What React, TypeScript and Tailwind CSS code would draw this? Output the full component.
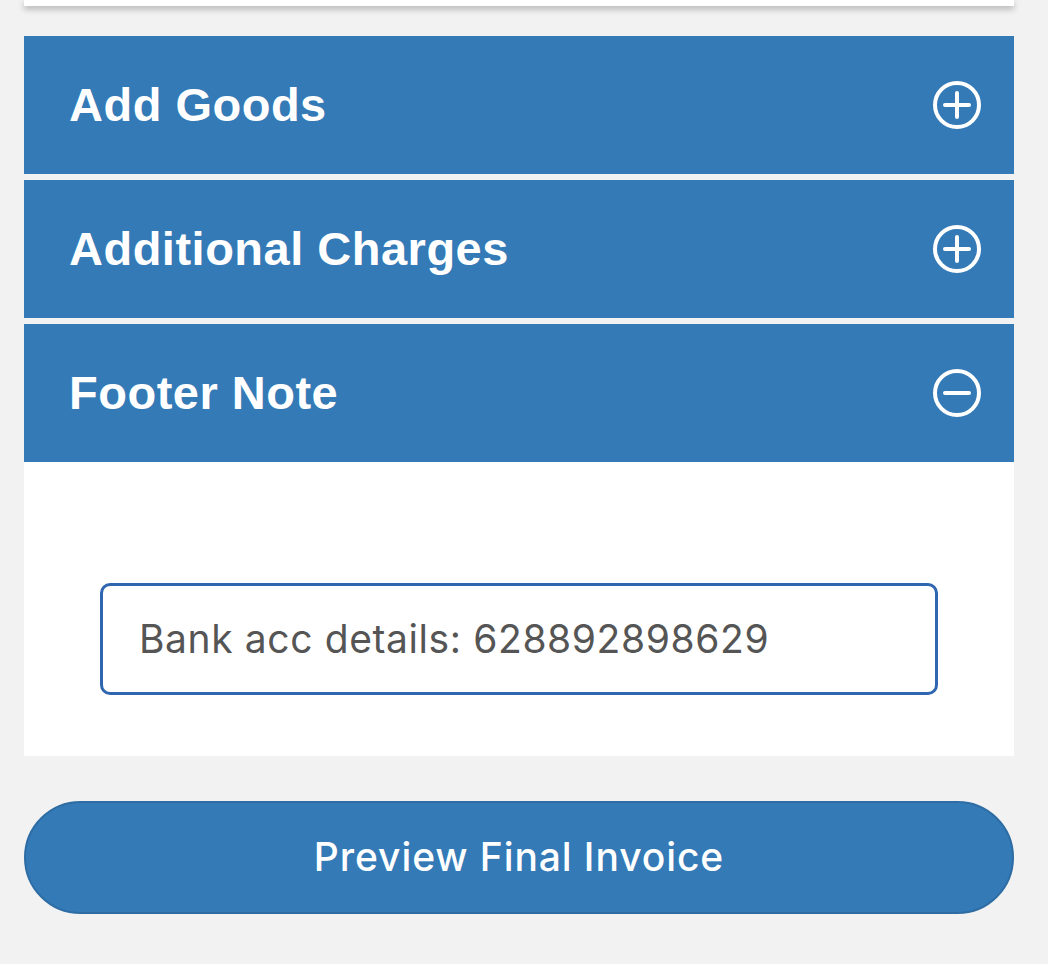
import { ReactNode } from 'react';

const CircleIcon = ({ open }: { open: boolean }) => (
  <svg width="50" height="50" viewBox="0 0 50 50" fill="none" stroke="white" strokeWidth="4" strokeLinecap="round">
    <circle cx="25" cy="25" r="22" />
    <line x1="13" y1="25" x2="37" y2="25" />
    {!open && <line x1="25" y1="13" x2="25" y2="37" />}
  </svg>
);

interface SectionProps {
  title: string;
  open?: boolean;
  children?: ReactNode;
}

const Section = ({ title, open = false, children }: SectionProps) => {
  return (
    <div>
      <div className="h-[138px] bg-[#337ab7] flex items-center justify-between pl-[45px] pr-[32px]">
        <span className="text-[47px] font-bold text-white font-['Liberation_Sans',sans-serif] tracking-[0.5px]">
          {title}
        </span>
        <CircleIcon open={open} />
      </div>
      {open && children}
    </div>
  );
};

const App = () => {
  return (
    <div
      className="min-h-[964px] bg-[#f2f2f2] pl-[24px] pr-[34px] overflow-hidden"
      style={{ fontFamily: 'Inter, "Liberation Sans", sans-serif' }}
    >
      <div className="h-[6px] bg-white shadow-[0_3px_6px_rgba(0,0,0,0.28)]" />

      <div className="mt-[30px] flex flex-col gap-[6px]">
        <Section title="Add Goods" />
        <Section title="Additional Charges" />
        <Section title="Footer Note" open>
          <div className="bg-white px-[76px] pt-[121px] pb-[61px]">
            <div className="h-[112px] rounded-[10px] border-[3px] border-[#3066b0] flex items-center px-[36px]">
              <span className="text-[39px] text-[#555555] tracking-[0.6px]">Bank acc details: 628892898629</span>
            </div>
          </div>
        </Section>
      </div>

      <button className="mt-[45px] w-full h-[113px] rounded-full bg-[#337ab7] border-[2px] border-[#2e6da4] text-white text-[39px] font-medium tracking-[0.9px]">
        Preview Final Invoice
      </button>
    </div>
  );
};

export default App;
